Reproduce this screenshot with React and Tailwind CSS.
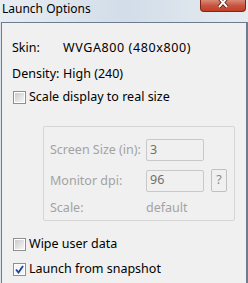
function CheckBox({ checked }) {
  return (
    <div className="w-[13px] h-[13px] border border-[#8e8f8f] bg-white p-px shrink-0">
      {checked ? (
        <div className="w-full h-full bg-[#f4f4f4] flex items-center justify-center">
          <svg width="9" height="9" viewBox="0 0 9 9">
            <path d="M1 4.5 L3.5 7.5 L8 1" fill="none" stroke="#21409a" strokeWidth="1.8" />
          </svg>
        </div>
      ) : (
        <div className="w-full h-full bg-gradient-to-br from-[#cbcbcb] to-[#f6f6f6]" />
      )}
    </div>
  );
}

export default function App() {
  return (
    <div className="w-[248px] h-[283px] flex flex-col overflow-hidden bg-[#dbe4ed] font-['Noto_Sans',sans-serif] text-[12.5px] text-black">
      <div className="h-[22px] shrink-0 flex items-start justify-between bg-gradient-to-r from-[#e8edf2] via-[#d2dde9] to-[#e6ebf0]">
        <span className="pl-[2px] pt-px leading-[16px] text-[12px]">Launch Options</span>
        <div className="mr-[2px] w-[46px] h-[12px] rounded-b-[4px] border border-t-0 border-[#7d2518] bg-gradient-to-b from-[#d98a78] via-[#c8553f] to-[#c23d27] flex items-start justify-center">
          <svg width="14" height="9" viewBox="0 0 14 9">
            <path d="M3 -2 L11 7 M11 -2 L3 7" stroke="#5a1a10" strokeWidth="3.6" />
            <path d="M3 -2 L11 7 M11 -2 L3 7" stroke="#ffffff" strokeWidth="2" />
          </svg>
        </div>
      </div>
      <div className="flex-1 ml-px border-l border-t border-r-2 border-[#6d7d8e] bg-[#f0f0f0] flex flex-col">
        <div className="flex pl-[10px] mt-[17px] leading-[16px]">
          <span className="w-[51px]">Skin:</span>
          <span className="tracking-[0.6px]">WVGA800 (480x800)</span>
        </div>
        <div className="flex pl-[10px] mt-[10px] leading-[16px]">
          <span className="w-[51px]">Density:</span>
          <span>High (240)</span>
        </div>
        <div className="flex items-center gap-[3px] pl-[11px] mt-[7px] leading-[16px]">
          <CheckBox />
          <span>Scale display to real size</span>
        </div>
        <div className="ml-[41px] mr-[11px] mt-[21px] h-[95px] border border-[#d6d6d6] rounded-[2px] flex flex-col text-[#a3a3a3] pl-[6px]">
          <div className="flex items-center mt-[12px]">
            <span className="w-[96px] leading-[16px]">Screen Size (in):</span>
            <div className="w-[58px] h-[22px] border border-[#c9c9c9] rounded-[2px] flex items-center pl-[3px] text-[#6f6f6f]">3</div>
          </div>
          <div className="flex items-center mt-[8px]">
            <span className="w-[96px] leading-[16px]">Monitor dpi:</span>
            <div className="w-[58px] h-[22px] border border-[#c9c9c9] rounded-[2px] flex items-center pl-[3px] text-[#6f6f6f]">96</div>
            <div className="ml-[7px] w-[16px] h-[23px] border border-[#c0c0c0] rounded-[2px] flex items-center justify-center text-[#8a8a8a]">?</div>
          </div>
          <div className="flex items-center mt-[8px]">
            <span className="w-[96px] leading-[16px]">Scale:</span>
            <span className="leading-[16px]">default</span>
          </div>
        </div>
        <div className="flex items-center gap-[3px] pl-[11px] mt-[15px] leading-[16px]">
          <CheckBox />
          <span>Wipe user data</span>
        </div>
        <div className="flex items-center gap-[3px] pl-[11px] mt-[9px] leading-[16px]">
          <CheckBox checked />
          <span>Launch from snapshot</span>
        </div>
      </div>
    </div>
  );
}
